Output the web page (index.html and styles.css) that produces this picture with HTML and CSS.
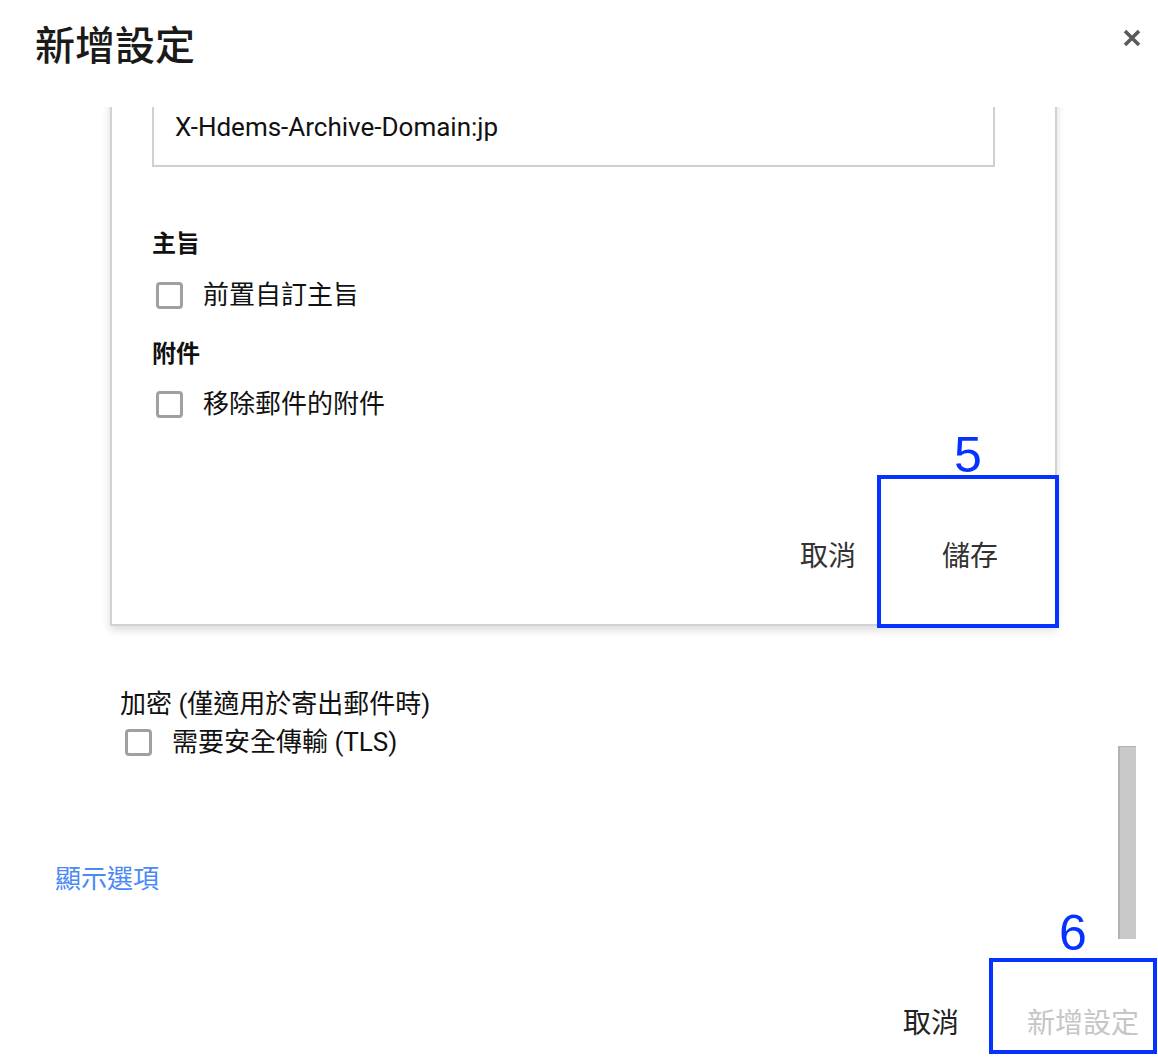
FILE: index.html
```html
<!DOCTYPE html>
<html lang="zh-Hant">
<head>
    <meta charset="UTF-8">
    <meta name="viewport" content="width=device-width, initial-scale=1.0">
    <title>新增設定</title>
    <link rel="stylesheet" href="styles.css">
</head>
<body>

    <div id="dialog">
        <div class="dialog-header">
            <h1>新增設定</h1>
            <svg class="close-icon" width="20" height="20" viewBox="0 0 20 20">
                <path d="M3 3 L17 17 M17 3 L3 17" stroke="#5a5a5a" stroke-width="3.6" fill="none"/>
            </svg>
        </div>

        <div class="scroll-area">
            <div class="card">
                <div class="textbox">X-Hdems-Archive-Domain:jp</div>

                <div class="section-title first">主旨</div>
                <div class="check-row">
                    <span class="checkbox"></span>
                    <span>前置自訂主旨</span>
                </div>

                <div class="section-title">附件</div>
                <div class="check-row">
                    <span class="checkbox"></span>
                    <span>移除郵件的附件</span>
                </div>

                <div class="card-actions">
                    <span class="btn">取消</span>
                    <span class="btn">儲存</span>
                </div>
            </div>

            <div class="encrypt">
                <div class="encrypt-label">加密 (僅適用於寄出郵件時)</div>
                <div class="check-row">
                    <span class="checkbox"></span>
                    <span>需要安全傳輸 (TLS)</span>
                </div>
            </div>

            <div class="show-options">顯示選項</div>

            <div class="scroll-thumb"></div>
        </div>

        <div class="dialog-actions">
            <span class="btn">取消</span>
            <span class="btn disabled">新增設定</span>
        </div>

        <!-- step markers -->
        <div class="step-num" id="num5">5</div>
        <div class="step-box" id="box5"></div>
        <div class="step-num" id="num6">6</div>
        <div class="step-box" id="box6"></div>
    </div>

</body>
</html>
```

FILE: styles.css
```css
body {
    margin: 0;
    padding: 0;
    background-color: white;
    color: #111;
    font-family: Roboto, "Noto Sans CJK TC", sans-serif;
}

#dialog {
    position: relative;
    width: 1158px;
    height: 1058px;
    overflow: hidden;
}

.dialog-header {
    display: flex;
    justify-content: space-between;
    align-items: flex-start;
    height: 107px;
    box-sizing: border-box;
    padding: 23px 16px 0 35px;
}

.dialog-header h1 {
    margin: 0;
    font-size: 40px;
    line-height: 48px;
    font-weight: 500;
    color: #1a1a1a;
}

.close-icon {
    margin-top: 5px;
}

.scroll-area {
    position: relative;
    height: 840px;
    overflow: hidden;
}

.card {
    margin: -30px 0 0 110px;
    width: 947px;
    box-sizing: border-box;
    padding: 20px 0 0 40px;
    border: 2px solid #d2d2d2;
    border-top: none;
    box-shadow: 0 4px 8px rgba(0, 0, 0, 0.14);
    background: white;
}

.textbox {
    width: 843px;
    height: 70px;
    box-sizing: border-box;
    border: 2px solid #d0d0d0;
    padding: 13px 0 0 21px;
    font-size: 26px;
    line-height: 30px;
    color: #111;
}

.section-title {
    margin-top: 25px;
    margin-bottom: 16px;
    font-size: 24px;
    line-height: 32px;
    font-weight: 700;
}

.section-title.first {
    margin-top: 61px;
    margin-bottom: 17px;
}

.check-row {
    display: flex;
    align-items: center;
    gap: 20px;
    height: 36px;
    font-size: 26px;
    line-height: 36px;
}

.card .check-row {
    padding-left: 4px;
}

.checkbox {
    width: 27px;
    height: 27px;
    box-sizing: border-box;
    border: 3px solid #a0a0a0;
    border-radius: 4px;
}

.card-actions {
    display: flex;
    justify-content: flex-end;
    gap: 26px;
    padding: 107px 27px 39px 0;
}

.btn {
    padding: 0 30px;
    font-size: 28px;
    line-height: 56px;
    color: #333;
}

.encrypt {
    margin: 60px 0 0 120px;
    font-size: 26px;
    line-height: 36px;
}

.encrypt-label {
    margin-bottom: 2px;
}

.encrypt .check-row {
    padding-left: 5px;
}

.show-options {
    margin: 101px 0 0 55px;
    font-size: 26px;
    line-height: 36px;
    color: #4a8af4;
}

.scroll-thumb {
    position: absolute;
    top: 639px;
    right: 22px;
    width: 18px;
    height: 193px;
    box-sizing: border-box;
    background: #c9c9c9;
    border-left: 2px solid #b3b3b3;
    border-top: 1px solid #b3b3b3;
}

.dialog-actions {
    display: flex;
    justify-content: flex-end;
    gap: 36px;
    height: 111px;
    box-sizing: border-box;
    padding: 49px 3px 0 0;
}

.dialog-actions .btn {
    padding: 0 16px;
    color: #222;
}

.dialog-actions .btn.disabled {
    color: #c6c6c6;
}

.step-box {
    position: absolute;
    box-sizing: border-box;
    border: 4px solid #0433ff;
}

.step-num {
    position: absolute;
    font-family: "Liberation Sans", Arial, sans-serif;
    font-size: 50px;
    line-height: 50px;
    color: #0433ff;
    text-align: center;
}

#box5 {
    left: 877px;
    top: 475px;
    width: 182px;
    height: 153px;
}

#num5 {
    left: 877px;
    top: 430px;
    width: 182px;
}

#box6 {
    left: 989px;
    top: 958px;
    width: 168px;
    height: 96px;
}

#num6 {
    left: 989px;
    top: 908px;
    width: 168px;
}
```
